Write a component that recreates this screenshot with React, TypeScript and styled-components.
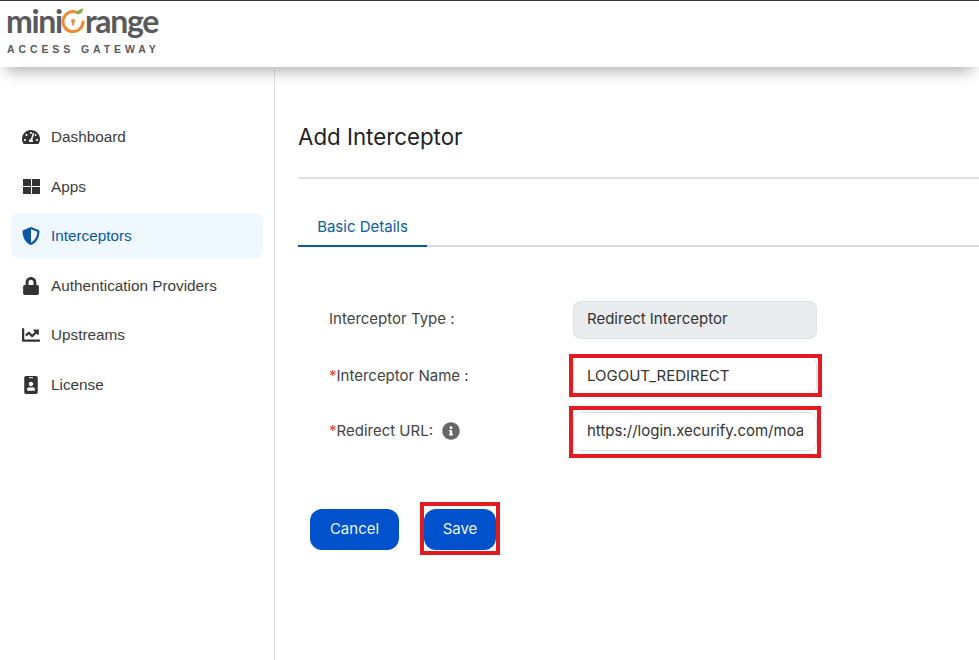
import styled, { createGlobalStyle } from "styled-components";
import {
  FaTachometerAlt,
  FaShieldAlt,
  FaLock,
  FaChartLine,
  FaIdBadge,
  FaInfoCircle,
} from "react-icons/fa";

const GlobalStyle = createGlobalStyle`
  html, body {
    margin: 0;
    padding: 0;
    background: #fff;
    overflow: hidden;
  }
  * {
    box-sizing: border-box;
  }
`;

const Page = styled.div`
  width: 979px;
  height: 660px;
  display: flex;
  flex-direction: column;
  overflow: hidden;
`;

const Header = styled.header`
  position: relative;
  z-index: 2;
  height: 67px;
  flex-shrink: 0;
  padding: 3px 0 0 6px;
  background: #fff;
  border-top: 1px solid #3a3a3a;
  box-shadow: 0 10px 14px -6px rgba(0, 0, 0, 0.32);
`;

const Logo = styled.div`
  width: 154px;
  display: flex;
  flex-direction: column;
`;

const LogoWord = styled.div`
  height: 34px;
  display: flex;
  align-items: center;
  font-family: "Lato", sans-serif;
  font-size: 32px;
  font-weight: 700;
  line-height: 34px;
  letter-spacing: -1.3px;
  color: #5a5a5c;
`;

const LogoMark = styled.svg`
  width: 24px;
  height: 26px;
  margin: -1px 0 0 -1px;
  flex-shrink: 0;
`;

const LogoTag = styled.div`
  margin-top: 5px;
  padding-left: 1px;
  font-family: "Liberation Sans", Arial, sans-serif;
  font-size: 10.5px;
  font-weight: 700;
  line-height: 12px;
  letter-spacing: 3.9px;
  white-space: nowrap;
  color: #5a5a5c;
`;

const Body = styled.div`
  flex: 1;
  display: flex;
  min-height: 0;
  margin-top: 3px;
`;

const Sidebar = styled.nav`
  width: 275px;
  flex-shrink: 0;
  padding: 44.4px 11px 0;
  display: flex;
  flex-direction: column;
  gap: 4.5px;
  border-right: 1px solid #dcdcdc;
`;

const NavItem = styled.a<{ $active?: boolean }>`
  height: 45px;
  padding: 0.3px 0 0 11px;
  display: flex;
  align-items: center;
  gap: 11px;
  border-radius: 8px;
  font-family: "Liberation Sans", Arial, sans-serif;
  font-size: 15.3px;
  color: ${(p) => (p.$active ? "#0b57a4" : "#3c3c3c")};
  background: ${(p) => (p.$active ? "#eff7ff" : "transparent")};
`;

const NavIcon = styled.span<{ $active?: boolean }>`
  width: 18px;
  height: 18px;
  display: flex;
  align-items: center;
  justify-content: center;
  flex-shrink: 0;
  font-size: 18px;
  color: ${(p) => (p.$active ? "#0b57a4" : "#333")};
`;

const Main = styled.main`
  flex: 1;
  min-width: 0;
  padding: 52px 0 0 23px;
  font-family: "Inter", sans-serif;
`;

const Title = styled.h1`
  margin: 0;
  padding-bottom: 25px;
  font-size: 22.3px;
  font-weight: 400;
  line-height: 30px;
  color: #222;
  border-bottom: 2px solid #e2e2e2;
`;

const Tabs = styled.div`
  margin-top: 28px;
  display: flex;
  border-bottom: 2px solid #dadada;
`;

const Tab = styled.div`
  width: 129px;
  height: 40px;
  margin-bottom: -2px;
  text-align: center;
  font-size: 15px;
  font-weight: 400;
  line-height: 40px;
  color: #0b5ba8;
  border-bottom: 2px solid #0b5ba8;
`;

const Form = styled.div`
  margin: 54px 0 0 31px;
  display: grid;
  grid-template-columns: 244px 244px;
  row-gap: 17px;
`;

const Label = styled.div<{ $lift: number }>`
  padding-bottom: ${(p) => p.$lift}px;
  display: flex;
  align-items: center;
  font-size: 15px;
  color: #444;
`;

const Required = styled.span`
  color: #e53935;
`;

const InfoIcon = styled(FaInfoCircle)`
  margin-left: 9px;
  font-size: 18px;
  color: #666;
`;

const Control = styled.div<{ $mark?: string }>`
  position: relative;
  &::after {
    content: "";
    display: ${(p) => (p.$mark ? "block" : "none")};
    position: absolute;
    inset: ${(p) => p.$mark};
    border: 4px solid #e01b22;
    pointer-events: none;
  }
`;

const Field = styled.input<{ $height: number; $lift: number }>`
  width: 100%;
  height: ${(p) => p.$height}px;
  padding: 0 13px ${(p) => p.$lift}px;
  display: block;
  border: 1px solid #dee2e6;
  border-radius: 8px;
  outline: none;
  font-family: "Inter", sans-serif;
  font-size: 15px;
  color: #333;
  background: #fff;
  &:read-only[data-locked="true"] {
    background: #e9ecef;
  }
`;

const Actions = styled.div`
  margin: 58px 0 0 12px;
  display: flex;
  gap: 25px;
`;

const Button = styled.button<{ $width: number; $mark?: boolean }>`
  position: relative;
  width: ${(p) => p.$width}px;
  height: 41px;
  padding: 0 0 2px;
  border: 0;
  border-radius: 12px;
  font-family: "Inter", sans-serif;
  font-size: 15px;
  font-weight: 400;
  color: #eaf4ff;
  background: #0052cc;
  &::after {
    content: "";
    display: ${(p) => (p.$mark ? "block" : "none")};
    position: absolute;
    inset: -7px -4px -5px -4px;
    border: 4px solid #e01b22;
    pointer-events: none;
  }
`;

function AppsIcon() {
  return (
    <svg width="17" height="15" viewBox="0 0 17 15" fill="currentColor">
      <rect x="0" y="0" width="8" height="7" />
      <rect x="9" y="0" width="8" height="7" />
      <rect x="0" y="8" width="8" height="7" />
      <rect x="9" y="8" width="8" height="7" />
    </svg>
  );
}

const navItems = [
  { label: "Dashboard", icon: <FaTachometerAlt /> },
  { label: "Apps", icon: <AppsIcon /> },
  { label: "Interceptors", icon: <FaShieldAlt />, active: true },
  { label: "Authentication Providers", icon: <FaLock /> },
  { label: "Upstreams", icon: <FaChartLine /> },
  { label: "License", icon: <FaIdBadge /> },
];

function OrangeMark() {
  return (
    <LogoMark viewBox="0 0 24 26">
      <path
        d="M15.5 4.2 A10 10 0 1 0 22 14"
        fill="none"
        stroke="#ee8a36"
        strokeWidth="3"
        strokeLinecap="round"
      />
      <path d="M15.5 6 C16 3 18.5 1 22 0.5 C22 4 19.5 7 15.5 6 Z" fill="#7cb342" />
      <circle cx="12" cy="13" r="2" fill="#ee8a36" />
      <rect x="11.1" y="13.5" width="1.8" height="4" fill="#ee8a36" />
    </LogoMark>
  );
}

export default function App() {
  return (
    <Page>
      <GlobalStyle />
      <Header>
        <Logo>
          <LogoWord>
            mini
            <OrangeMark />
            range
          </LogoWord>
          <LogoTag>ACCESS GATEWAY</LogoTag>
        </Logo>
      </Header>
      <Body>
        <Sidebar>
          {navItems.map((item) => (
            <NavItem key={item.label} $active={item.active}>
              <NavIcon $active={item.active}>{item.icon}</NavIcon>
              {item.label}
            </NavItem>
          ))}
        </Sidebar>
        <Main>
          <Title>Add Interceptor</Title>
          <Tabs>
            <Tab>Basic Details</Tab>
          </Tabs>
          <Form>
            <Label $lift={4}>Interceptor Type :</Label>
            <Control>
              <Field $height={38} $lift={3} data-locked="true" readOnly value="Redirect Interceptor" />
            </Control>
            <Label $lift={0}>
              <Required>*</Required>Interceptor Name :
            </Label>
            <Control $mark="-2px -5px -2px -4px">
              <Field $height={39} $lift={0} readOnly value="LOGOUT_REDIRECT" />
            </Control>
            <Label $lift={2}>
              <Required>*</Required>Redirect URL:
              <InfoIcon />
            </Label>
            <Control $mark="-6px -4px -7px -4px">
              <Field $height={39} $lift={2} readOnly value="https://login.xecurify.com/moa" />
            </Control>
          </Form>
          <Actions>
            <Button $width={89}>Cancel</Button>
            <Button $width={72} $mark>
              Save
            </Button>
          </Actions>
        </Main>
      </Body>
    </Page>
  );
}
